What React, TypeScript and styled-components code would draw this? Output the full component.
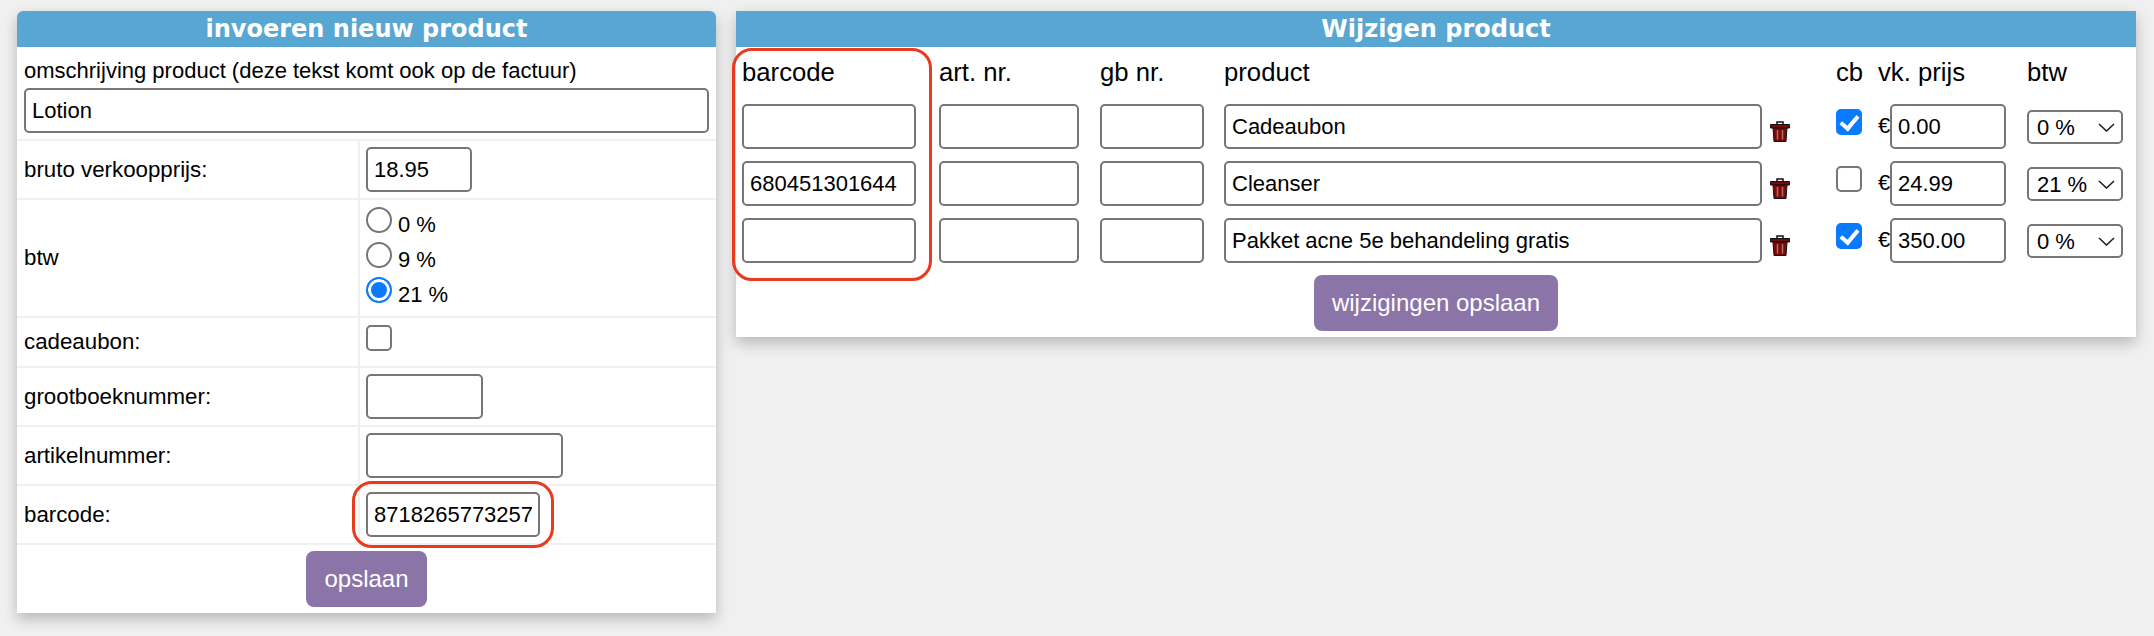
import styled, { createGlobalStyle } from 'styled-components'

const GlobalStyle = createGlobalStyle`
  html, body {
    margin: 0;
    background: #f0f0f0;
  }
  body {
    font-family: "Liberation Sans", Arial, sans-serif;
    color: #000;
  }
`

const Page = styled.div`
  display: flex;
  align-items: flex-start;
  gap: 20px;
  height: 636px;
  box-sizing: border-box;
  padding: 11px 0 0 17px;
  overflow: hidden;
`

const Panel = styled.section<{ $width: number; $rounded?: boolean }>`
  position: relative;
  width: ${p => p.$width}px;
  flex: none;
  background: #fff;
  box-shadow: 0 6px 14px rgba(0, 0, 0, 0.24);
  border-radius: ${p => (p.$rounded ? '6px 6px 0 0' : '0')};
`

const PanelTitle = styled.h2<{ $rounded?: boolean }>`
  margin: 0;
  height: 36px;
  line-height: 36px;
  text-align: center;
  background: #58a7d3;
  color: #fff;
  font-family: "DejaVu Sans", Verdana, sans-serif;
  font-size: 24px;
  font-weight: 700;
  border-radius: ${p => (p.$rounded ? '6px 6px 0 0' : '0')};
`

const FormGrid = styled.div`
  display: grid;
  grid-template-columns: 341px 1fr;
  grid-template-rows: 92px 57px 116px 48px 57px 57px 57px 68px;
  gap: 2px;
  background: #f0f0f0;
`

const FullCell = styled.div`
  grid-column: 1 / -1;
  background: #fff;
  padding: 0 7px;
`

const ActionCell = styled(FullCell)`
  display: flex;
  justify-content: center;
  padding-top: 6px;
`

const LabelCell = styled.div`
  display: flex;
  align-items: center;
  background: #fff;
  padding-left: 7px;
  font-size: 22.3px;
`

const ValueCell = styled.div<{ $top?: boolean }>`
  display: flex;
  align-items: ${p => (p.$top ? 'flex-start' : 'center')};
  background: #fff;
  padding: ${p => (p.$top ? '7px' : '0')} 0 0 6px;
`

const DescriptionLabel = styled.div`
  height: 41px;
  line-height: 48px;
  font-size: 22px;
`

const TextInput = styled.input<{ $width?: number }>`
  display: block;
  box-sizing: border-box;
  width: ${p => (p.$width ? `${p.$width}px` : '100%')};
  height: 45px;
  padding: 0 6px;
  border: 2px solid #767676;
  border-radius: 5px;
  background: #fff;
  color: #000;
  font-family: inherit;
  font-size: 22px;
  outline: none;
`

const RadioGroup = styled.div`
  display: flex;
  flex-direction: column;
`

const RadioRow = styled.label`
  display: flex;
  height: 35px;
  gap: 6px;
  font-size: 22px;
  line-height: 35px;
`

const Radio = styled.input.attrs({ type: 'radio' })`
  appearance: none;
  box-sizing: border-box;
  width: 26px;
  height: 26px;
  margin: 0;
  border: 2px solid #767676;
  border-radius: 50%;
  background: #fff;
  &:checked {
    border-color: #0a7aff;
    box-shadow: inset 0 0 0 3px #fff;
    background: #0a7aff;
  }
`

const Checkbox = styled.input.attrs({ type: 'checkbox' })`
  appearance: none;
  position: relative;
  display: block;
  box-sizing: border-box;
  width: 26px;
  height: 26px;
  margin: 0;
  border: 2px solid #767676;
  border-radius: 5px;
  background: #fff;
  &:checked {
    border-color: #0a7aff;
    background: #0a7aff;
  }
  &:checked::before {
    content: '';
    position: absolute;
    left: 6px;
    top: 1px;
    width: 7px;
    height: 14px;
    border: solid #fff;
    border-width: 0 4px 4px 0;
    transform: rotate(40deg);
  }
`

const PrimaryButton = styled.button`
  height: 56px;
  padding: 0 18px;
  border: 0;
  border-radius: 8px;
  background: #8a74a8;
  color: #fff;
  font-family: inherit;
  font-size: 24px;
`

const BarcodeWrap = styled.div`
  position: relative;
`

const Highlight = styled.div`
  position: absolute;
  box-sizing: border-box;
  border: 3px solid #e93a1e;
  border-radius: 20px;
  pointer-events: none;
`

const InputHighlight = styled(Highlight)`
  inset: -11px -14px -11px -14px;
`

const ColumnHighlight = styled(Highlight)`
  left: -4px;
  top: 37px;
  width: 200px;
  height: 233px;
`

const EditBody = styled.div`
  padding: 0 0 6px 6px;
`

const EditGrid = styled.div`
  display: grid;
  grid-template-columns: 197px 161px 124px 546px 66px 42px 149px 96px;
  grid-auto-rows: 57px;
`

const HeadCell = styled.div`
  font-size: 25.7px;
  line-height: 50px;
`

const TrashCell = styled.div`
  padding-top: 17px;
`

const CheckCell = styled.div`
  padding-top: 5px;
`

const PriceCell = styled.div`
  display: flex;
  align-items: flex-start;
  font-size: 22px;
  line-height: 44px;
`

const Euro = styled.span`
  width: 12px;
  overflow: hidden;
`

const SelectWrap = styled.div`
  position: relative;
  width: 96px;
  margin-top: 6px;
`

const BtwSelect = styled.select`
  appearance: none;
  display: block;
  box-sizing: border-box;
  width: 100%;
  height: 34px;
  padding: 0 0 0 8px;
  border: 2px solid #767676;
  border-radius: 5px;
  background: #fff;
  color: #000;
  font-family: inherit;
  font-size: 22px;
  outline: none;
`

const Chevron = styled.svg`
  position: absolute;
  right: 8px;
  top: 13px;
  width: 17px;
  height: 9px;
  pointer-events: none;
`

const ButtonRow = styled.div`
  display: flex;
  justify-content: center;
  margin-left: -6px;
`

const TrashIcon = () => (
  <svg width="20" height="21" viewBox="0 0 20 21">
    <path d="M7 3V1h6v2" fill="none" stroke="#111" strokeWidth="1.5" />
    <path d="M.5 7V3.500h19V7z" fill="#7a0a0a" stroke="#111" strokeWidth="1" />
    <path d="M3 7h14l-1 13.500H4z" fill="#7a0a0a" stroke="#111" strokeWidth="1" />
    <path d="M7.500 9v9.500M12.500 9v9.500" stroke="#b86a6a" strokeWidth="1.500" />
  </svg>
)

const products = [
  { barcode: '', name: 'Cadeaubon', giftCard: true, price: '0.00', vat: '0' },
  { barcode: '680451301644', name: 'Cleanser', giftCard: false, price: '24.99', vat: '21' },
  { barcode: '', name: 'Pakket acne 5e behandeling gratis', giftCard: true, price: '350.00', vat: '0' },
]

export default function App() {
  return (
    <Page>
      <GlobalStyle />
      <Panel $width={699} $rounded>
        <PanelTitle $rounded>invoeren nieuw product</PanelTitle>
        <FormGrid>
          <FullCell>
            <DescriptionLabel>omschrijving product (deze tekst komt ook op de factuur)</DescriptionLabel>
            <TextInput defaultValue="Lotion" />
          </FullCell>
          <LabelCell>bruto verkoopprijs:</LabelCell>
          <ValueCell>
            <TextInput $width={106} defaultValue="18.95" />
          </ValueCell>
          <LabelCell>btw</LabelCell>
          <ValueCell $top>
            <RadioGroup>
              <RadioRow><Radio name="btw" />0 %</RadioRow>
              <RadioRow><Radio name="btw" />9 %</RadioRow>
              <RadioRow><Radio name="btw" defaultChecked />21 %</RadioRow>
            </RadioGroup>
          </ValueCell>
          <LabelCell>cadeaubon:</LabelCell>
          <ValueCell $top>
            <Checkbox />
          </ValueCell>
          <LabelCell>grootboeknummer:</LabelCell>
          <ValueCell>
            <TextInput $width={117} />
          </ValueCell>
          <LabelCell>artikelnummer:</LabelCell>
          <ValueCell>
            <TextInput $width={197} />
          </ValueCell>
          <LabelCell>barcode:</LabelCell>
          <ValueCell>
            <BarcodeWrap>
              <TextInput $width={174} defaultValue="8718265773257" />
              <InputHighlight />
            </BarcodeWrap>
          </ValueCell>
          <ActionCell>
            <PrimaryButton>opslaan</PrimaryButton>
          </ActionCell>
        </FormGrid>
      </Panel>

      <Panel $width={1400}>
        <PanelTitle>Wijzigen product</PanelTitle>
        <EditBody>
          <EditGrid>
            <HeadCell>barcode</HeadCell>
            <HeadCell>art. nr.</HeadCell>
            <HeadCell>gb nr.</HeadCell>
            <HeadCell>product</HeadCell>
            <HeadCell />
            <HeadCell>cb</HeadCell>
            <HeadCell>vk. prijs</HeadCell>
            <HeadCell>btw</HeadCell>
            {products.map(product => (
              <>
                <TextInput $width={174} defaultValue={product.barcode} />
                <TextInput $width={140} />
                <TextInput $width={104} />
                <TextInput $width={538} defaultValue={product.name} />
                <TrashCell><TrashIcon /></TrashCell>
                <CheckCell><Checkbox defaultChecked={product.giftCard} /></CheckCell>
                <PriceCell>
                  <Euro>€</Euro>
                  <TextInput $width={116} defaultValue={product.price} />
                </PriceCell>
                <SelectWrap>
                  <BtwSelect defaultValue={product.vat}>
                    <option value="0">0 %</option>
                    <option value="9">9 %</option>
                    <option value="21">21 %</option>
                  </BtwSelect>
                  <Chevron viewBox="0 0 17 9">
                    <path d="M1 1l7.500 7L16 1" fill="none" stroke="#222" strokeWidth="1.600" />
                  </Chevron>
                </SelectWrap>
              </>
            ))}
          </EditGrid>
          <ButtonRow>
            <PrimaryButton>wijzigingen opslaan</PrimaryButton>
          </ButtonRow>
          <ColumnHighlight />
        </EditBody>
      </Panel>
    </Page>
  )
}
